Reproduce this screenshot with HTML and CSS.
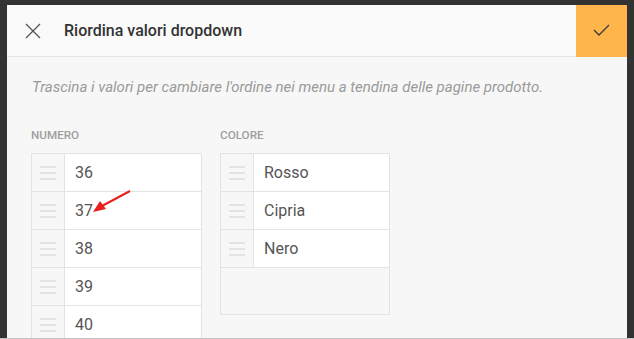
FILE: index.html
```html
<!DOCTYPE html>
<html lang="it">
<head>
    <meta charset="UTF-8">
    <title>Riordina valori dropdown</title>
    <link rel="stylesheet" href="styles.css">
</head>
<body>

<div class="modal">
    <div class="modal-header">
        <button class="btn-close" type="button">
            <svg width="16" height="16" viewBox="0 0 16 16"><path d="M1 1L15 15M15 1L1 15" stroke="#555" stroke-width="1.3" fill="none"/></svg>
        </button>
        <h2>Riordina valori dropdown</h2>
        <button class="btn-confirm" type="button">
            <svg width="18" height="14" viewBox="0 0 18 14"><path d="M1 6L6 11L16 1" stroke="#3a3a3a" stroke-width="1.3" fill="none"/></svg>
        </button>
    </div>

    <div class="modal-body">
        <p class="hint">Trascina i valori per cambiare l'ordine nei menu a tendina delle pagine prodotto.</p>

        <div class="columns">
            <div class="column col-numero">
                <h3>Numero</h3>
                <ul class="sort-list">
                    <li><span class="handle"></span><span class="value">36</span></li>
                    <li class="marked"><span class="handle"></span><span class="value">37</span>
                        <svg class="arrow" width="40" height="26" viewBox="0 0 40 26">
                            <path d="M38 1L10 16" stroke="#e8201c" stroke-width="2" fill="none"/>
                            <polygon points="1,22 8,11 14,19" fill="#e8201c"/>
                        </svg>
                    </li>
                    <li><span class="handle"></span><span class="value">38</span></li>
                    <li><span class="handle"></span><span class="value">39</span></li>
                    <li><span class="handle"></span><span class="value">40</span></li>
                </ul>
            </div>
            <div class="column col-colore">
                <h3>Colore</h3>
                <ul class="sort-list">
                    <li><span class="handle"></span><span class="value">Rosso</span></li>
                    <li><span class="handle"></span><span class="value">Cipria</span></li>
                    <li><span class="handle"></span><span class="value">Nero</span></li>
                    <li class="empty"></li>
                </ul>
            </div>
        </div>
    </div>
</div>

</body>
</html>
```

FILE: styles.css
```css
html, body {
    margin: 0;
}

body {
    height: 339px;
    box-sizing: border-box;
    padding: 5px 7px 0 7px;
    background-color: #333;
    border-bottom: 1px solid #c4c4c4;
    overflow: hidden;
    font-family: Roboto, "Liberation Sans", sans-serif;
}

.modal {
    background-color: #f7f7f7;
    height: 100%;
}

.modal-header {
    display: flex;
    align-items: center;
    height: 51px;
    background-color: #fafafa;
    border-bottom: 1px solid #e4e4e4;
}

.btn-close {
    width: 51px;
    height: 51px;
    border: none;
    background: none;
    padding: 0;
    display: flex;
    align-items: center;
    justify-content: center;
}

.modal-header h2 {
    flex: 1;
    margin: 0 0 0 6px;
    font-size: 16px;
    font-weight: 500;
    color: #333;
}

.btn-confirm {
    width: 51px;
    height: 52px;
    align-self: flex-start;
    border: none;
    padding: 0;
    background-color: #ffb54c;
    display: flex;
    align-items: center;
    justify-content: center;
}

.modal-body {
    padding: 20px 24px 0 24px;
}

.hint {
    margin: 0 0 0 1px;
    font-size: 15px;
    line-height: 20px;
    font-style: italic;
    color: #9a9a9a;
}

.columns {
    display: flex;
    gap: 18px;
    margin-top: 31px;
}

.column h3 {
    margin: 0 0 11px 0;
    font-size: 11.7px;
    line-height: 14px;
    font-weight: 500;
    text-transform: uppercase;
    color: #9e9e9e;
}

.col-numero {
    width: 171px;
}

.col-colore {
    width: 170px;
}

.sort-list {
    list-style: none;
    margin: 0;
    padding: 0;
    border: 1px solid #e3e3e3;
}

.sort-list li {
    display: flex;
    height: 37px;
    border-bottom: 1px solid #e3e3e3;
    background-color: #fff;
    position: relative;
}

.sort-list li.empty {
    height: 46px;
    background-color: #f7f7f7;
    border-bottom: none;
}

.handle {
    width: 32px;
    flex-shrink: 0;
    background-color: #f7f7f7;
    border-right: 1px solid #e3e3e3;
    background-image: linear-gradient(#e4e4e4, #e4e4e4), linear-gradient(#e4e4e4, #e4e4e4), linear-gradient(#e4e4e4, #e4e4e4);
    background-size: 16px 2px;
    background-repeat: no-repeat;
    background-position: 8px 12px, 8px 18px, 8px 24px;
}

.value {
    padding-left: 10px;
    line-height: 37px;
    font-size: 16px;
    color: #555;
}

.arrow {
    position: absolute;
    left: 60px;
    top: -2px;
}
```
